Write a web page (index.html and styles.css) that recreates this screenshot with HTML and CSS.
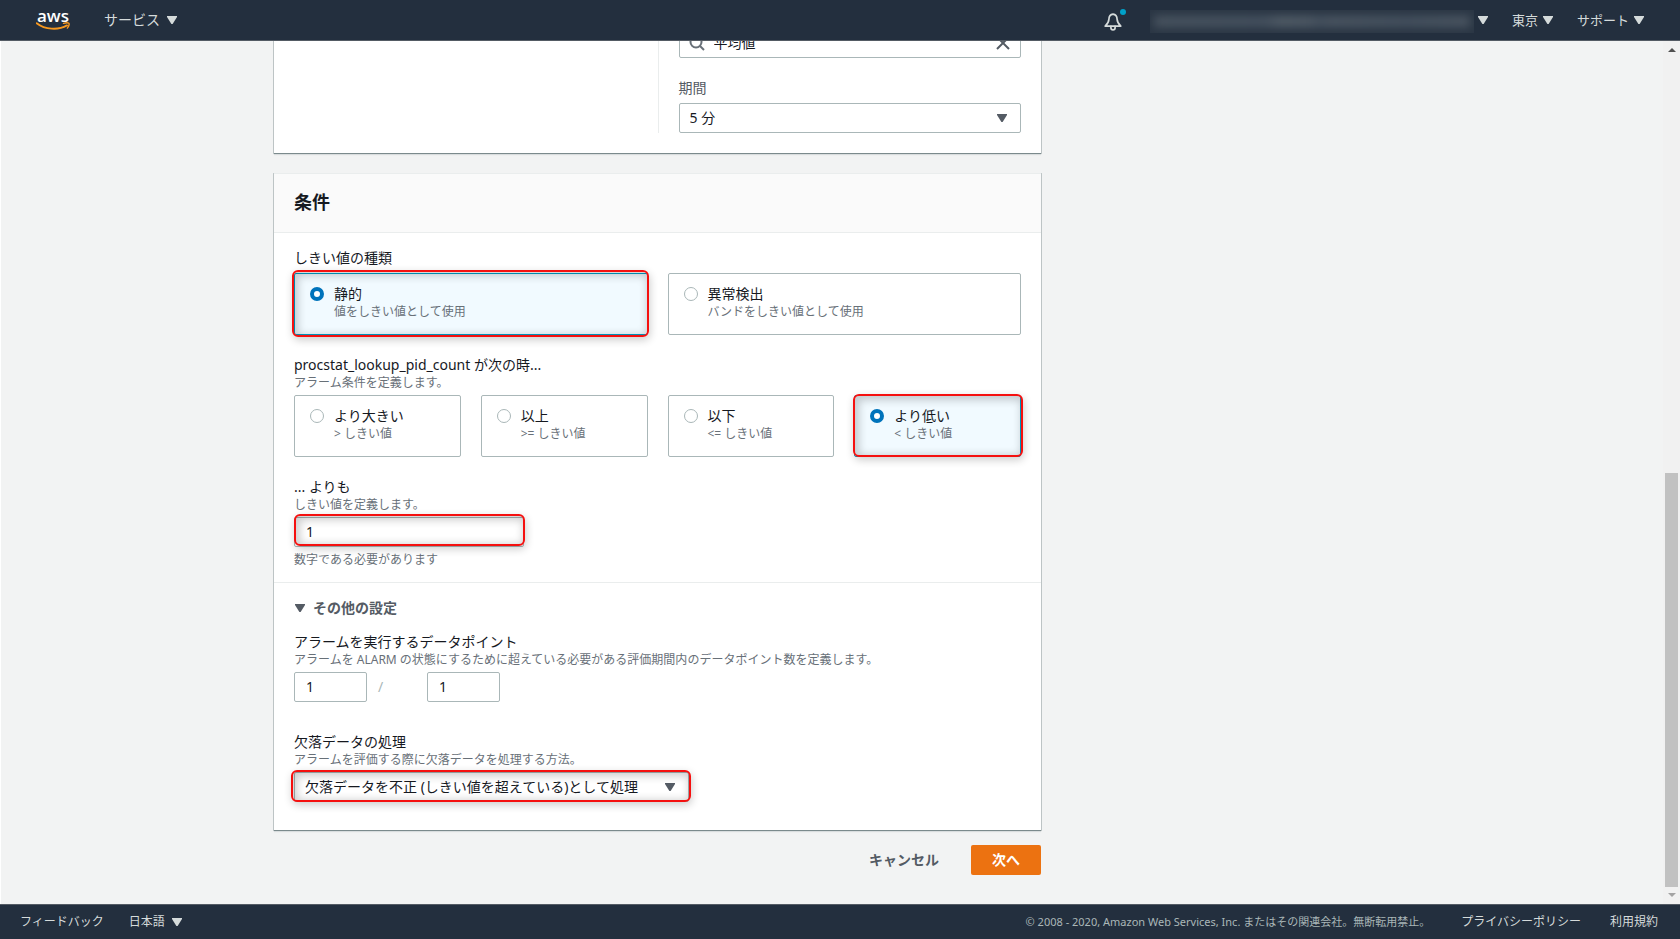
FILE: index.html
```html
<!DOCTYPE html>
<html lang="ja">
<head>
<meta charset="utf-8">
<meta name="viewport" content="width=device-width, initial-scale=1">
<title>CloudWatch アラームの作成</title>
<link rel="stylesheet" href="styles.css">
</head>
<body>
<svg class="sprite" aria-hidden="true">
  <symbol id="caret" viewBox="0 0 10 8"><path d="M0 0h10v1L5.600 8H4.400L0 1z"/></symbol>
</svg>

<header class="topbar">
  <a class="logo" href="#" aria-label="AWS">
    <span class="logo-text">aws</span>
    <svg class="logo-smile" viewBox="0 0 34 9" aria-hidden="true">
      <path d="M.7 1.200C9 7.600 22 8.600 31 3.400" fill="none" stroke="#f7981f" stroke-width="1.900" stroke-linecap="round"/>
      <path d="M27.500 1.400C30 .7 32.200.8 32.900 1.300c.5.8-.1 3-1.500 4.800" fill="none" stroke="#f7981f" stroke-width="1.400" stroke-linecap="round" stroke-linejoin="round"/>
    </svg>
  </a>
  <button class="nav services">サービス<svg class="caret"><use href="#caret"/></svg></button>
  <div class="topbar-right">
    <button class="bell" aria-label="通知">
      <svg viewBox="0 0 18 18" fill="none" stroke="#d5dbdb" stroke-width="1.700" stroke-linejoin="round" stroke-linecap="round">
        <path d="M9 1.200C6.300 1.600 5 3.600 4.900 6.200 4.800 9 3.800 10.600 1.200 13.100h15.600C14.200 10.600 13.200 9 13.100 6.200 13 3.600 11.700 1.600 9 1.200z"/>
        <path d="M6.900 13.300v1.400a2.100 2.100 0 0 0 4.200 0v-1.400"/>
      </svg>
      <span class="bell-dot"></span>
    </button>
    <button class="nav account" aria-label="アカウント"><span class="account-name"><span class="account-blur"></span></span><svg class="caret"><use href="#caret"/></svg></button>
    <button class="nav region">東京<svg class="caret"><use href="#caret"/></svg></button>
    <button class="nav support">サポート<svg class="caret"><use href="#caret"/></svg></button>
  </div>
</header>

<div class="viewport">
  <main class="page">
    <div class="column">
      <section class="card metric">
        <div class="metric-fields">
          <div class="search">
            <svg class="search-icon" viewBox="0 0 16 16" fill="none" stroke="#687078" stroke-width="2"><circle cx="7" cy="7" r="5.500"/><path d="M11 11l4 4"/></svg>
            <input class="control" type="text" value="平均値" aria-label="統計">
            <button class="clear" aria-label="クリア"><svg viewBox="0 0 14 14" fill="none" stroke="#545b64" stroke-width="2"><path d="M1 1l12 12M13 1L1 13"/></svg></button>
          </div>
          <label class="label muted" for="period">期間</label>
          <div class="select">
            <select class="control" id="period"><option>5 分</option></select>
            <svg class="caret"><use href="#caret"/></svg>
          </div>
        </div>
      </section>

      <section class="card">
        <div class="card-head"><h2>条件</h2></div>
        <div class="card-body">
          <div class="group" role="radiogroup" aria-labelledby="type-label">
            <div class="label" id="type-label">しきい値の種類</div>
            <div class="tiles two">
              <label class="tile checked marked wide"><input type="radio" name="type" checked><span class="tile-text"><span class="tile-title">静的</span><span class="desc">値をしきい値として使用</span></span></label>
              <label class="tile"><input type="radio" name="type"><span class="tile-text"><span class="tile-title">異常検出</span><span class="desc">バンドをしきい値として使用</span></span></label>
            </div>
          </div>
          <div class="group" role="radiogroup" aria-labelledby="op-label">
            <div class="label" id="op-label">procstat_lookup_pid_count が次の時...</div>
            <div class="desc under-label">アラーム条件を定義します。</div>
            <div class="tiles four">
              <label class="tile"><input type="radio" name="op"><span class="tile-text"><span class="tile-title">より大きい</span><span class="desc">&gt; しきい値</span></span></label>
              <label class="tile"><input type="radio" name="op"><span class="tile-text"><span class="tile-title">以上</span><span class="desc">&gt;= しきい値</span></span></label>
              <label class="tile"><input type="radio" name="op"><span class="tile-text"><span class="tile-title">以下</span><span class="desc">&lt;= しきい値</span></span></label>
              <label class="tile checked marked snug"><input type="radio" name="op" checked><span class="tile-text"><span class="tile-title">より低い</span><span class="desc">&lt; しきい値</span></span></label>
            </div>
          </div>
          <div class="group">
            <label class="label" for="threshold">... よりも</label>
            <div class="desc under-label">しきい値を定義します。</div>
            <div class="threshold marked high"><input class="control" id="threshold" type="text" value="1"></div>
            <div class="desc hint">数字である必要があります</div>
          </div>
        </div>
        <div class="card-body more">
          <button class="expander" aria-expanded="true"><svg class="caret"><use href="#caret"/></svg>その他の設定</button>
          <div class="group">
            <label class="label" for="points">アラームを実行するデータポイント</label>
            <div class="desc under-label">アラームを ALARM の状態にするために超えている必要がある評価期間内のデータポイント数を定義します。</div>
            <div class="points">
              <input class="control" id="points" type="text" value="1">
              <span class="slash">/</span>
              <input class="control" type="text" value="1" aria-label="評価期間">
            </div>
          </div>
          <div class="group spaced">
            <label class="label" for="missing">欠落データの処理</label>
            <div class="desc under-label">アラームを評価する際に欠落データを処理する方法。</div>
            <div class="select missing marked over">
              <select class="control" id="missing"><option>欠落データを不正 (しきい値を超えている)として処理</option></select>
              <svg class="caret"><use href="#caret"/></svg>
            </div>
          </div>
        </div>
      </section>

      <div class="actions">
        <button class="cancel">キャンセル</button>
        <button class="next">次へ</button>
      </div>
    </div>
  </main>
  <div class="scrollbar" aria-hidden="true">
    <span class="arrow up"></span>
    <span class="track"><span class="thumb"></span></span>
    <span class="arrow down"></span>
  </div>
</div>

<footer class="footer">
  <a href="#">フィードバック</a>
  <button class="nav language">日本語<svg class="caret"><use href="#caret"/></svg></button>
  <span class="copyright">© 2008 - 2020, Amazon Web Services, Inc. またはその関連会社。無断転用禁止。</span>
  <a class="privacy" href="#">プライバシーポリシー</a>
  <a class="terms" href="#">利用規約</a>
</footer>
</body>
</html>
```

FILE: styles.css
```css
* { box-sizing: border-box; }

body {
  margin: 0;
  height: 100vh;
  display: flex;
  flex-direction: column;
  overflow: hidden;
  background: #fff;
  color: #16191f;
  font: 14px/20px "Noto Sans", "Noto Sans CJK JP", sans-serif;
}

button, input, select { font: inherit; color: inherit; }
button { background: none; border: 0; padding: 0; cursor: pointer; }
a { color: inherit; text-decoration: none; }

.sprite { display: none; }
.caret { width: 10px; height: 8px; fill: currentColor; flex: none; }

/* Top bar */
.topbar {
  flex: none;
  height: 41px;
  display: flex;
  align-items: center;
  padding: 0 36px 1px;
  background: #232f3e;
  border-bottom: 1px solid #545b64;
  color: #d5dbdb;
}
.logo { display: flex; flex-direction: column; align-items: center; width: 34px; }
.logo-text {
  color: #fff;
  font: 600 17px/13px "Open Sans", sans-serif;
}
.logo-smile { width: 34px; height: 9px; }
.nav { display: flex; align-items: center; gap: 7px; white-space: nowrap; }
.services { margin-left: 34px; }
.topbar-right { margin-left: auto; display: flex; align-items: center; font-size: 13px; }
.topbar-right .caret { width: 10px; }
.bell { position: relative; display: flex; margin: 4px 28px 0 0; }
.bell svg { width: 18px; height: 18px; }
.bell-dot {
  position: absolute;
  top: -4px;
  right: -4px;
  width: 6px;
  height: 6px;
  border-radius: 50%;
  background: #00a1c9;
}
.account { gap: 4px; }
.account-name {
  width: 324px;
  height: 23px;
  display: flex;
  align-items: center;
  margin-top: 3px;
  overflow: hidden;
  background: #2a3644;
}
.account-blur {
  flex: 1;
  height: 11px;
  margin: 0 4px;
  background: linear-gradient(90deg, #4a5561, #465260 35%, #535e69 40%, #4f5a66 50%, #465260 52%, #4c5763 56%, #465260 80%, #4c5763);
  filter: blur(5px);
}
.region, .support { gap: 5px; margin-left: 24px; }

/* Scrolling area, held at its end */
.viewport { flex: 1; min-height: 0; display: flex; padding-left: 1px; }
.page {
  flex: 1;
  min-width: 0;
  display: grid;
  grid-template-columns: 273fr 767fr 622fr;
  align-content: end;
  overflow: hidden;
  background: #f2f3f3;
}
.column { grid-column: 2; display: flex; flex-direction: column; }

.scrollbar {
  width: 17px;
  display: flex;
  flex-direction: column;
  align-items: center;
  padding: 7px 2px;
  background: #f1f1f1;
}
.arrow { border: 4px solid transparent; }
.up { border-top: 0; border-bottom-color: #505050; }
.down { border-bottom: 0; border-top-color: #a3a3a3; }
.track { flex: 1; align-self: stretch; display: flex; flex-direction: column; justify-content: flex-end; padding: 6px 0; }
.thumb { height: 50%; background: #c1c1c1; }

/* Cards */
.card {
  background: #fff;
  border-top: 1px solid #eaeded;
  box-shadow: 0 1px 1px rgba(0, 28, 36, .1), 1px 0 0 rgba(0, 28, 36, .2), -1px 0 0 rgba(0, 28, 36, .2);
  border-bottom: 1px solid #7b8a8c;
  margin-bottom: 19px;
}
.card-head { padding: 18px 20px 20px; background: #fafafa; border-bottom: 1px solid #eaeded; }
h2 { margin: 0; font-size: 18px; line-height: 20px; font-weight: 700; }
.card-body { padding: 15px 20px; }
.more { border-top: 1px solid #eaeded; padding: 15px 20px 28px; }

.metric { padding: 20px; display: grid; grid-template-columns: 1fr 1fr; }
.metric-fields { grid-column: 2; padding: 60px 0 0 20px; border-left: 1px solid #eaeded; }

/* Fields */
.label { display: block; line-height: 20px; margin-bottom: 5px; }
.muted { color: #545b64; margin-top: 20px; }
.desc { display: block; color: #687078; font-size: 12px; line-height: 16px; }
.label:has(+ .under-label) { margin-bottom: 0; }
.under-label { margin-bottom: 4px; }
.hint { margin-top: 5px; margin-bottom: -1px; }
.group + .group { margin-top: 20px; }
.group + .spaced { margin-top: 30px; }

.control {
  display: block;
  width: 100%;
  height: 30px;
  padding: 0 10px;
  background: #fff;
  border: 1px solid #aab7b8;
  border-radius: 2px;
  appearance: none;
}
.select, .search { position: relative; }
.select .caret { position: absolute; right: 14px; top: 11px; color: #545b64; pointer-events: none; }
.search .control { padding: 0 34px 2px; }
.search-icon { position: absolute; left: 10px; top: 7px; width: 16px; height: 16px; }
.clear { position: absolute; right: 11px; top: 8px; display: flex; }
.clear svg { width: 14px; height: 14px; }

.threshold { width: 230px; }
.threshold .control, .points .control { padding: 0 11px 2px; }
.points { display: flex; align-items: center; }
.points .control { width: 73px; }
.slash { width: 60px; padding-left: 11px; color: #aab7b8; }
.missing { width: fit-content; }
.missing .control { padding-right: 48px; }

/* Option tiles */
.tiles { display: grid; gap: 20px; }
.two { grid-template-columns: repeat(2, 1fr); }
.four { grid-template-columns: repeat(4, 1fr); }
.tile {
  display: flex;
  gap: 10px;
  padding: 10px 15px 14px;
  border: 1px solid #aab7b8;
  border-radius: 2px;
}
.tile input {
  appearance: none;
  flex: none;
  width: 14px;
  height: 14px;
  margin: 3px 0 0;
  border: 1px solid #aab7b8;
  border-radius: 50%;
  background: #fff;
}
.tile input:checked { border: 4px solid #0073bb; }
.tile-title { display: block; }
.checked { background: #f1faff; border-color: #00a1c9; }

/* Red highlight frames */
.marked { position: relative; }
.marked::after {
  content: "";
  position: absolute;
  inset: -2px;
  border: 2px solid #f5100f;
  border-radius: 6px;
  box-shadow: 1px 3px 8px rgba(0, 0, 0, .2), inset 2px 2px 8px 2px rgba(0, 0, 0, .2);
  pointer-events: none;
}
.wide::after { inset: -4px -2px -3px -3px; }
.snug::after { inset: -2px -3px -1px -2px; }
.high::after { inset: -3px -1px 1px 0; }
.over::after { inset: -2px -2px 0 -3px; }

/* Expander and actions */
.expander {
  display: flex;
  align-items: center;
  gap: 8px;
  margin-bottom: 14px;
  padding-left: 1px;
  color: #545b64;
  font-weight: 700;
}
.actions { display: flex; justify-content: flex-end; gap: 20px; margin: -5px 0 29px; }
.cancel { padding: 0 12px; color: #545b64; font-weight: 700; }
.next {
  height: 30px;
  padding: 0 21px;
  background: #ec7211;
  border-radius: 2px;
  color: #fff;
  font-weight: 700;
}

/* Footer */
.footer {
  flex: none;
  height: 35px;
  display: flex;
  align-items: center;
  padding: 0 22px 0 20px;
  background: #232f3e;
  border-top: 1px solid #545b64;
  color: #d5dbdb;
  font-size: 12px;
  white-space: nowrap;
}
.language { margin-left: 25px; }
.copyright { margin-left: auto; color: #aab7b8; font-size: 11px; }
.privacy { margin-left: 31px; }
.terms { margin-left: 29px; }
```
